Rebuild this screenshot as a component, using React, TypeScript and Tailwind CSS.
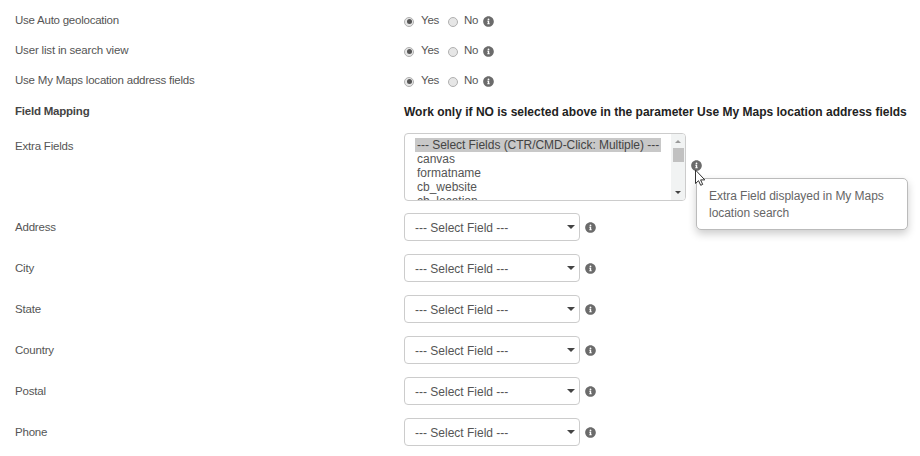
import { FaInfoCircle } from "react-icons/fa";

const toggles = [
  { label: "Use Auto geolocation", tracking: "tracking-[-0.24px]" },
  { label: "User list in search view", tracking: "tracking-[-0.18px]" },
  { label: "Use My Maps location address fields", tracking: "tracking-[-0.22px]" },
];

const options = ["canvas", "formatname", "cb_website", "cb_location"];

const fields = ["Address", "City", "State", "Country", "Postal", "Phone"];

function Info() {
  return <FaInfoCircle className="size-[11px] shrink-0 text-[#6b6b6b]" />;
}

function Radio({ checked = false }: { checked?: boolean }) {
  return (
    <span className="mt-px flex size-[10px] shrink-0 items-center justify-center rounded-full border border-[#b0b0b0] bg-[#e6e6e6]">
      {checked && <span className="size-[5px] rounded-full bg-[#555]" />}
    </span>
  );
}

function Cursor() {
  return (
    <svg className="absolute left-[679px] top-[36px] z-10" width="12" height="18" viewBox="0 0 12 18">
      <path
        d="M1.5 1v13.5l3-2.8 2.2 4.6 2-.9-2.1-4.5h4.2z"
        fill="#fff"
        stroke="#333"
        strokeWidth="1"
        strokeLinejoin="round"
      />
    </svg>
  );
}

export default function App() {
  return (
    <div className="h-[456px] w-[920px] overflow-hidden bg-white pl-[15px] pt-[6px] font-['Liberation_Sans',Arial,sans-serif] text-[11.5px] text-[#555]">
      {toggles.map((t) => (
        <div key={t.label} className="flex h-[30px] items-center">
          <div className={`w-[389px] ${t.tracking}`}>{t.label}</div>
          <Radio checked />
          <span className="ml-[7px] w-[27px] tracking-[-0.2px]">Yes</span>
          <Radio />
          <span className="ml-[6px] w-[19px] tracking-[-0.2px]">No</span>
          <Info />
        </div>
      ))}

      <div className="flex h-[31px] items-center whitespace-nowrap font-bold">
        <div className="w-[389px] pt-px tracking-[-0.22px] text-[#444]">Field Mapping</div>
        <div className="text-[12px] tracking-[0.01px] text-[#222]">
          Work only if NO is selected above in the parameter Use My Maps location address fields
        </div>
      </div>

      <div className="relative mt-[6px] flex h-[68px]">
        <div className="w-[389px] pt-[5px] tracking-[-0.2px]">Extra Fields</div>
        <div className="flex w-[282px] overflow-hidden rounded-[4px] border border-[#ccc] text-[12px] leading-[14px]">
          <div className="flex-1 whitespace-nowrap pl-[10px] pt-[4px]">
            <div className="w-[246px] bg-[#c8c8c8] pl-[2px] tracking-[-0.04px] text-[#444]">
              --- Select Fields (CTR/CMD-Click: Multiple) ---
            </div>
            {options.map((o) => (
              <div key={o} className="pl-[2px]">
                {o}
              </div>
            ))}
          </div>
          <div className="flex w-[14px] flex-col items-center bg-[#f1f3f3]">
            <span className="mt-[6px] border-x-[3px] border-b-[3px] border-x-transparent border-b-[#999]" />
            <span className="mt-[5px] h-[14px] w-[11px] bg-[#c1c1c1]" />
            <span className="mb-[6px] mt-auto border-x-[3px] border-t-[3px] border-x-transparent border-t-[#444]" />
          </div>
        </div>
        <div className="ml-[5px] mt-[27px]">
          <Info />
        </div>
        <div className="absolute left-[681px] top-[45px] h-[52px] w-[212px] rounded-[5px] border border-[#bbb] bg-white pl-[12px] pt-[9px] text-[12px] leading-[17px] tracking-[-0.04px] text-[#666] shadow-[0_4px_8px_rgba(0,0,0,0.2)]">
          Extra Field displayed in My Maps
          <br />
          location search
        </div>
        <Cursor />
      </div>

      <div className="mt-[12px] flex flex-col gap-[13px]">
        {fields.map((f) => (
          <div key={f} className="flex h-[28px] items-center">
            <div className="w-[389px] pt-[2px] tracking-[-0.2px]">{f}</div>
            <div className="flex h-[28px] w-[176px] items-center justify-between rounded-[4px] border border-[#ccc] pl-[10px] pr-[4px] text-[12px]">
              <span className="pt-px">--- Select Field ---</span>
              <span className="border-x-[4px] border-t-[4px] border-x-transparent border-t-[#444]" />
            </div>
            <div className="ml-[5px]">
              <Info />
            </div>
          </div>
        ))}
      </div>
    </div>
  );
}
